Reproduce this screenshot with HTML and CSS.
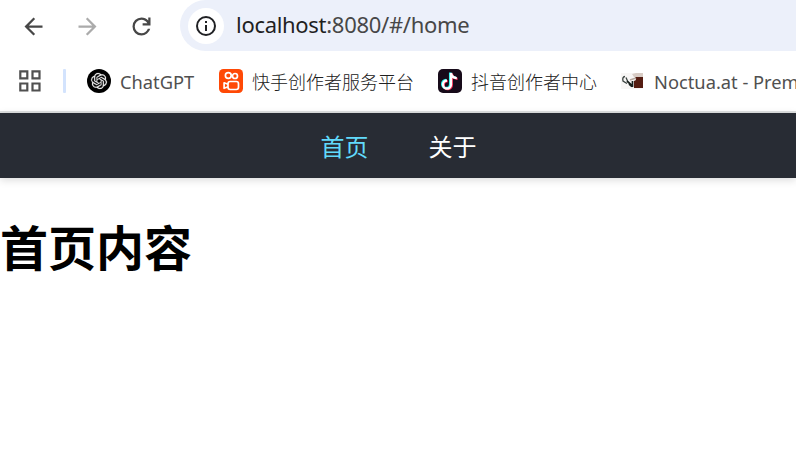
FILE: index.html
```html
<!DOCTYPE html>
<html lang="zh-CN">
<head>
<meta charset="utf-8">
<title>首页</title>
<link rel="stylesheet" href="styles.css">
</head>
<body>
<div class="toolbar">
  <div class="controls">
    <svg class="control" viewBox="0 0 24 24"><path d="M20 11H7.83l5.59-5.59L12 4l-8 8 8 8 1.41-1.41L7.83 13H20z"/></svg>
    <svg class="control disabled" viewBox="0 0 24 24"><path d="M12 4l-1.41 1.41L16.17 11H4v2h12.17l-5.58 5.59L12 20l8-8z"/></svg>
    <svg class="control" viewBox="0 0 24 24"><path d="M12 20q-3.35 0-5.675-2.325T4 12t2.325-5.675T12 4q1.725 0 3.3.713T18 6.75V4h2v7h-7V9h4.200q-.8-1.400-2.188-2.200T12 6Q9.500 6 7.750 7.750T6 12t1.750 4.250T12 18q1.925 0 3.475-1.100T17.650 14h2.100q-.7 2.650-2.850 4.325T12 20"/></svg>
  </div>
  <div class="address">
    <span class="site-info"><svg viewBox="0 0 20 20"><circle cx="10" cy="10" r="9" fill="none" stroke="#202124" stroke-width="2"/><path d="M9 9h2v6H9zM9 5h2v2H9z" fill="#202124"/></svg></span>
    <span class="url"><span class="host">localhost</span>:8080/#/home</span>
  </div>
</div>
<div class="bookmarks">
  <svg class="apps" viewBox="0 0 22 22" fill="none" stroke="#505050" stroke-width="2.2"><path d="M1.300 1.300h7v7h-7zM13.500 1.300h7v7h-7zM1.300 13.500h7v7h-7zM13.500 13.500h7v7h-7z"/></svg>
  <span class="divider"></span>
  <div class="bookmark latin chatgpt">
    <svg viewBox="0 0 24 24"><circle cx="12" cy="12" r="12" fill="#000"/><g transform="translate(4 4) scale(.667)"><path fill="#eee" stroke="#eee" stroke-width=".3" d="M22.282 9.821a5.985 5.985 0 0 0-.516-4.910 6.046 6.046 0 0 0-6.510-2.900A6.065 6.065 0 0 0 4.981 4.182a5.985 5.985 0 0 0-3.998 2.900 6.046 6.046 0 0 0 .743 7.097 5.980 5.980 0 0 0 .510 4.911 6.051 6.051 0 0 0 6.515 2.900A5.985 5.985 0 0 0 13.260 24a6.056 6.056 0 0 0 5.772-4.206 5.990 5.990 0 0 0 3.998-2.900 6.056 6.056 0 0 0-.748-7.073zM13.260 22.430a4.476 4.476 0 0 1-2.876-1.040l.141-.081 4.779-2.758a.795.795 0 0 0 .393-.681v-6.737l2.020 1.169a.071.071 0 0 1 .038.052v5.583a4.504 4.504 0 0 1-4.495 4.493zM3.600 18.304a4.471 4.471 0 0 1-.535-3.014l.142.085 4.783 2.759a.771.771 0 0 0 .781 0l5.843-3.369v2.333a.080.080 0 0 1-.033.062L9.740 19.950a4.499 4.499 0 0 1-6.140-1.646zM2.341 7.896a4.485 4.485 0 0 1 2.366-1.973V11.600a.766.766 0 0 0 .388.677l5.815 3.354-2.020 1.169a.076.076 0 0 1-.071 0l-4.830-2.787A4.504 4.504 0 0 1 2.341 7.896zm16.596 3.856l-5.833-3.387L15.119 7.200a.076.076 0 0 1 .071 0l4.830 2.791a4.494 4.494 0 0 1-.676 8.104v-5.677a.790.790 0 0 0-.407-.666zm2.010-3.023l-.141-.085-4.774-2.782a.776.776 0 0 0-.785 0L9.409 9.230V6.897a.066.066 0 0 1 .028-.061l4.830-2.787a4.499 4.499 0 0 1 6.680 4.680zM8.307 12.863l-2.020-1.164a.080.080 0 0 1-.038-.057V6.074a4.499 4.499 0 0 1 7.376-3.453l-.142.080L8.704 5.459a.795.795 0 0 0-.393.681zm1.097-2.365l2.602-1.500 2.607 1.500v2.999l-2.597 1.500-2.607-1.500z"/></g></svg>
    <span>ChatGPT</span>
  </div>
  <div class="bookmark kuaishou">
    <svg viewBox="0 0 24 24"><rect width="24" height="24" rx="4.500" fill="#ff4906"/><g fill="none" stroke="#fff" stroke-width="1.700"><circle cx="9.300" cy="6.500" r="2.900"/><circle cx="16" cy="7" r="2.500"/><rect x="9" y="12.500" width="10.500" height="8" rx="2.200"/><path d="M9 15.300l-3.900-1.500v5.500L9 17.800" stroke-linejoin="round"/></g></svg>
    <span>快手创作者服务平台</span>
  </div>
  <div class="bookmark douyin">
    <svg viewBox="0 0 24 24"><rect width="24" height="24" rx="5" fill="#170b1a"/><g fill="none" stroke-width="2.300"><path d="M13 4v11.500a4 4 0 1 1-4-4M13 4c.4 2.900 2.600 4.900 5.800 5.100" stroke="#25f4ee" transform="translate(-.9 -.5)"/><path d="M13 4v11.500a4 4 0 1 1-4-4M13 4c.4 2.900 2.600 4.900 5.800 5.100" stroke="#fe2c55" transform="translate(.8 .7)"/><path d="M13 4v11.500a4 4 0 1 1-4-4M13 4c.4 2.900 2.600 4.900 5.800 5.100" stroke="#fff"/></g></svg>
    <span>抖音创作者中心</span>
  </div>
  <div class="bookmark latin noctua">
    <svg viewBox="0 0 24 24"><path d="M0 4h22v16H0z" fill="#f8f6f5"/><path d="M11 5l4-1h7v4h-9z" fill="#d8ccc5"/><path d="M14 8h8v11h-9v-7l2-1z" fill="#551d12"/><path d="M4 7.500Q1 8 2 12l4 2.500M5 8.500l1.500 3.500" fill="none" stroke="#3b4441" stroke-width="1.300"/><path d="M6 12l6 5.500M8 15l3 2.500M11.500 12v6" fill="none" stroke="#18201d" stroke-width="1.700"/><path d="M9 11l6-2" stroke="#b5a79e" stroke-width="1.500"/></svg>
    <span>Noctua.at - Prem</span>
  </div>
</div>
<nav class="nav">
  <a class="link active">首页</a>
  <a class="link">关于</a>
</nav>
<main><h1>首页内容</h1></main>
</body>
</html>
```
FILE: styles.css
```css
* { box-sizing: border-box; }
body {
  margin: 0;
  height: 475px;
  overflow: hidden;
  background: #fff;
  font-family: "Noto Sans", "Noto Sans CJK SC", sans-serif;
}
svg { display: block; flex: none; }
.toolbar { display: flex; height: 51px; }
.controls { display: flex; align-items: center; gap: 27px; width: 180px; padding: 1px 0 0 19.5px; }
.control { width: 27px; height: 27px; fill: #474747; }
.disabled { fill: #ababab; }
.address {
  display: flex;
  align-items: center;
  flex: 1;
  padding-left: 8px;
  background: #ecf0fa;
  border-radius: 26px 0 0 26px;
}
.site-info {
  display: flex;
  align-items: center;
  justify-content: center;
  width: 36px;
  height: 36px;
  margin-right: 12px;
  border-radius: 50%;
  background: #fff;
}
.site-info svg { width: 20px; height: 20px; }
.url { padding-bottom: 3px; color: #474747; font-size: 22px; letter-spacing: -.3px; white-space: nowrap; }
.host { color: #1f1f1f; }
.bookmarks {
  display: flex;
  align-items: center;
  height: 62px;
  padding: 0 0 1px 19px;
  border-bottom: 2px solid #dfe1e1;
  overflow: hidden;
}
.apps { width: 22px; height: 22px; }
.divider { flex: none; width: 3px; height: 24px; margin: 0 21px 0 22px; border-radius: 1px; background: #d3e3fd; }
.bookmark {
  display: flex;
  align-items: center;
  flex: none;
  gap: 9px;
  color: #202020;
  font-size: 18px;
  font-weight: 300;
  line-height: 26px;
  white-space: nowrap;
}
.bookmark span { padding-top: 3px; }
.latin { color: #505050; font-size: 18.300px; font-weight: 400; }
.bookmark svg { width: 24px; height: 24px; }
.chatgpt { width: 132px; }
.kuaishou { width: 219px; }
.douyin { width: 183px; }
.nav {
  display: flex;
  justify-content: center;
  align-items: center;
  gap: 60px;
  height: 65px;
  padding: 3px 0 0 1px;
  background: #282c34;
  box-shadow: 0 2px 8px rgba(0, 0, 0, .15);
}
.link { color: #fff; font-size: 24px; line-height: 36px; }
.active { color: #61dafb; }
h1 { margin: 35px 0 0; font-size: 48px; line-height: 70px; }
```
